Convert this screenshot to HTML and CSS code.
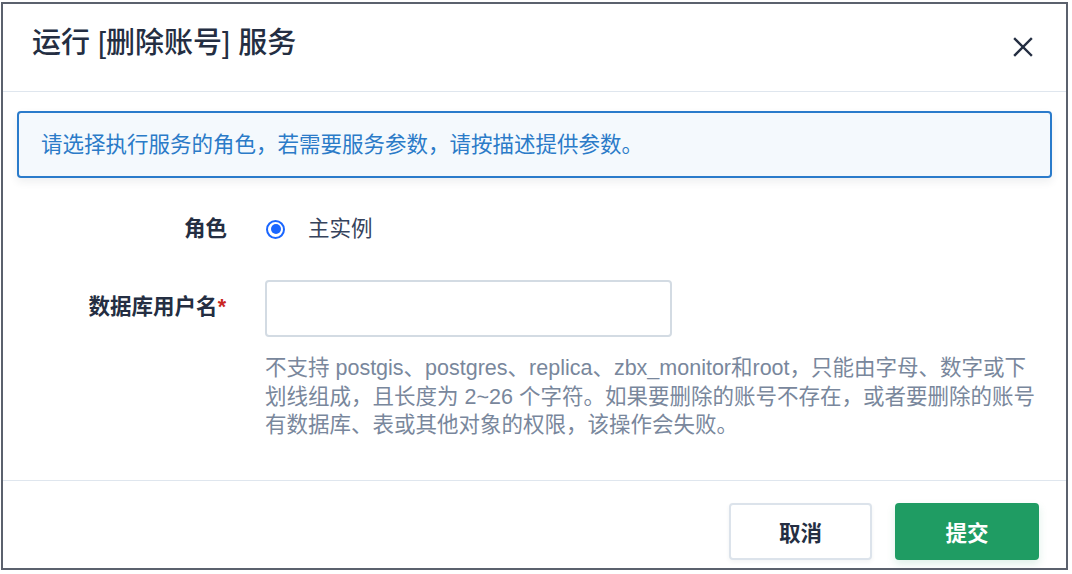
FILE: index.html
```html
<!DOCTYPE html>
<html lang="zh-CN">
<head>
<meta charset="utf-8">
<title>运行 [删除账号] 服务</title>
<link rel="stylesheet" href="styles.css">
</head>
<body>
<div class="dialog">
  <div class="header">
    <h1 class="title">运行 [删除账号] 服务</h1>
    <button class="close" aria-label="关闭">
      <svg width="20" height="20" viewBox="0 0 20 20"><path d="M2 2 L18 18 M18 2 L2 18" stroke="#242e42" stroke-width="2.4" stroke-linecap="square" fill="none"/></svg>
    </button>
  </div>
  <div class="content">
    <div class="alert">请选择执行服务的角色，若需要服务参数，请按描述提供参数。</div>
    <div class="form">
      <div class="label">角色</div>
      <div class="control radio-row">
        <span class="radio"><span class="dot"></span></span>
        <span class="radio-text">主实例</span>
      </div>
      <div class="label label-input">数据库用户名<span class="req">*</span></div>
      <div class="control">
        <input class="input" type="text">
        <p class="help">不支持 postgis、postgres、replica、zbx_monitor和root，只能由字母、数字或下划线组成，且长度为 2~26 个字符。如果要删除的账号不存在，或者要删除的账号有数据库、表或其他对象的权限，该操作会失败。</p>
      </div>
    </div>
  </div>
  <div class="footer">
    <button class="btn btn-cancel">取消</button>
    <button class="btn btn-submit">提交</button>
  </div>
</div>
</body>
</html>
```
FILE: styles.css
```css
* { box-sizing: border-box; }
html, body { margin: 0; padding: 0; background: #ffffff; }
body {
  font-family: "Liberation Sans", "Noto Sans CJK SC", sans-serif;
  color: #242e42;
}
.dialog {
  margin: 2px 0 0 1px;
  width: 1067px;
  height: 568px;
  border: 2px solid #5b616d;
  background: #fff;
  display: flex;
  flex-direction: column;
  overflow: hidden;
}
.header {
  height: 88px;
  border-bottom: 1px solid #dfe6ee;
  display: flex;
  align-items: center;
  justify-content: space-between;
  padding: 0 33px 10px 29px;
  flex-shrink: 0;
}
.title {
  margin: 0;
  font-size: 29px;
  font-weight: 500;
  line-height: 40px;
  color: #242e42;
}
.close {
  border: 0;
  background: transparent;
  padding: 0;
  width: 20px;
  height: 20px;
  margin-top: 8px;
  display: flex;
}
.content {
  padding: 19px 14px 0 14px;
}
.alert {
  height: 67px;
  border: 2px solid #2a7bcb;
  border-radius: 4px;
  background: #f4f9fd;
  box-shadow: 0 4px 8px rgba(36, 46, 66, 0.08);
  color: #2b7bc8;
  font-size: 21.5px;
  line-height: 30px;
  padding: 0 22px;
  display: flex;
  align-items: center;
}
.form {
  display: grid;
  grid-template-columns: 210px 1fr;
  column-gap: 38px;
  row-gap: 36px;
  margin-top: 36px;
  font-size: 21.5px;
}
.label {
  text-align: right;
  font-weight: 600;
  line-height: 30px;
  color: #242e42;
}
.label-input { padding-top: 12px; padding-right: 1px; }
.req { color: #ca2621; }
.radio-row {
  display: flex;
  align-items: center;
  gap: 23px;
  height: 30px;
}
.radio {
  width: 19px;
  height: 19px;
  border: 2px solid #1a66ff;
  border-radius: 50%;
  display: flex;
  align-items: center;
  justify-content: center;
  margin-left: 1px;
}
.dot {
  width: 10px;
  height: 10px;
  border-radius: 50%;
  background: #1a66ff;
}
.radio-text { color: #36435c; line-height: 30px; }
.input {
  display: block;
  width: 407px;
  height: 57px;
  border: 2px solid #d3dbe3;
  border-radius: 4px;
  background: #fff;
  outline: none;
}
.help {
  margin: 17px 0 0 0;
  width: 780px;
  font-size: 21.5px;
  line-height: 28.5px;
  color: #79879c;
}
.footer {
  margin-top: 40px;
  border-top: 1px solid #dfe6ee;
  display: flex;
  justify-content: flex-end;
  gap: 23px;
  padding: 22px 27px 0 0;
}
.btn {
  width: 143px;
  height: 57px;
  border-radius: 4px;
  font-family: "Liberation Sans", "Noto Sans CJK SC", sans-serif;
  font-size: 21.5px;
  font-weight: 600;
  cursor: pointer;
}
.btn-cancel {
  background: #fff;
  border: 2px solid #dce3eb;
  color: #242e42;
  box-shadow: 0 2px 4px rgba(36, 46, 66, 0.06);
}
.btn-submit {
  width: 144px;
  background: #1f9c63;
  border: 0;
  color: #fff;
  box-shadow: 0 4px 8px rgba(31, 156, 99, 0.15);
}
```
